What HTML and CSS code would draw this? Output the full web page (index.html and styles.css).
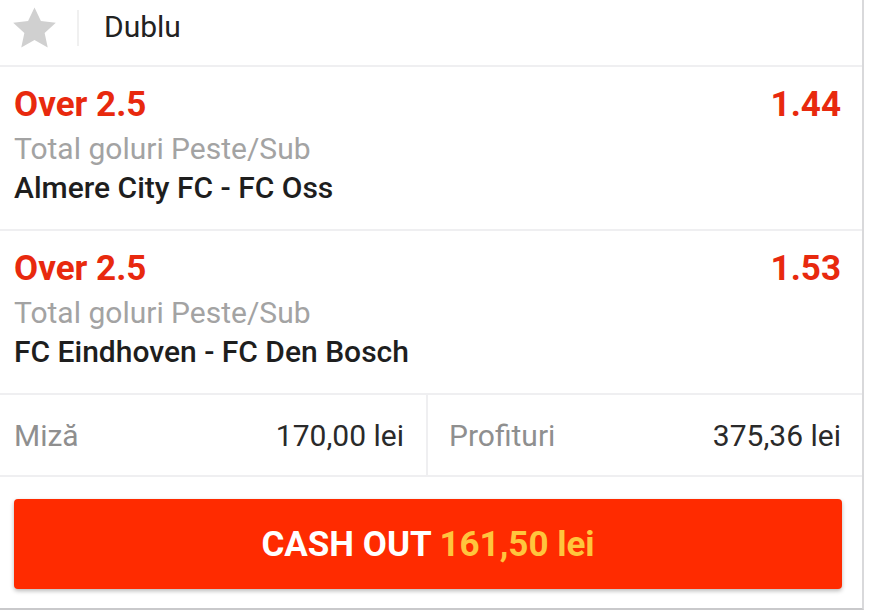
FILE: index.html
```html
<!DOCTYPE html>
<html lang="ro">
<head>
<meta charset="utf-8">
<link rel="stylesheet" href="styles.css">
</head>
<body>
<div class="card">
  <div class="head">
    <svg class="star" viewBox="1.6 1.6 20.8 19.8" width="43" height="41"><path d="M12 1.8l3.1 6.6 7.2.8-5.4 4.9 1.5 7.1L12 17.6l-6.4 3.6 1.5-7.1-5.4-4.9 7.2-.8z" fill="#d0d0d0"/></svg>
    <span class="sep"></span>
    <span class="title">Dublu</span>
  </div>
  <div class="sel">
    <div class="row1"><span class="pick">Over 2.5</span><span class="odd">1.44</span></div>
    <div class="market">Total goluri Peste/Sub</div>
    <div class="match">Almere City FC - FC Oss</div>
  </div>
  <div class="sel">
    <div class="row1"><span class="pick">Over 2.5</span><span class="odd">1.53</span></div>
    <div class="market">Total goluri Peste/Sub</div>
    <div class="match">FC Eindhoven - FC Den Bosch</div>
  </div>
  <div class="stakes">
    <div class="cell"><span class="lbl">Miză</span><span class="val">170,00 lei</span></div>
    <div class="cell right"><span class="lbl">Profituri</span><span class="val">375,36 lei</span></div>
  </div>
  <div class="btnwrap">
    <div class="btn">CASH OUT <span class="amt">161,50 lei</span></div>
  </div>
</div>
</body>
</html>
```

FILE: styles.css
```css
html, body { margin: 0; padding: 0; background: #fff; }
body { font-family: Roboto, "Noto Sans", sans-serif; width: 870px; height: 612px; overflow: hidden; }
.card {
  width: 862px;
  height: 608px;
  border-right: 2px solid #d9d9db;
  border-bottom: 2px solid #c9c9cb;
  background: #fff;
  display: flex;
  flex-direction: column;
}
.head {
  height: 67px;
  flex: none;
  border-bottom: 2px solid #efeff1;
  display: flex;
  align-items: center;
  box-sizing: border-box;
  padding-left: 13px;
  padding-bottom: 12px;
}
.star { display: block; margin-top: 2px; }
.sep { width: 2px; height: 36px; background: #f0f0f0; margin-left: 21px; margin-top: 2px; }
.title { font-size: 30px; color: #222; margin-left: 25px; }
.sel {
  height: 164px;
  flex: none;
  box-sizing: border-box;
  border-bottom: 2px solid #efeff1;
  padding: 17px 21px 0 14px;
  display: flex;
  flex-direction: column;
}
.row1 { display: flex; justify-content: space-between; height: 45px; line-height: 41px; font-size: 35px; font-weight: 700; color: #e8290e; }
.market { font-size: 30px; line-height: 39px; color: #a3a3a3; }
.match { font-size: 30px; line-height: 39px; color: #1e1e1e; font-weight: 500; }
.stakes {
  height: 82px;
  flex: none;
  box-sizing: border-box;
  display: grid;
  grid-template-columns: 426px 1fr;
  column-gap: 2px;
  background: #efeff1;
  border-bottom: 2px solid #efeff1;
}
.cell {
  background: #fff;
  display: flex;
  justify-content: space-between;
  align-items: center;
  padding: 0 22px 0 14px;
  font-size: 30px;
}
.cell.right { padding: 0 21px 0 21px; }
.lbl { color: #8f8f8f; }
.val { color: #2a2a2a; }
.btnwrap { padding: 22px 20px 0 14px; }
.btn {
  height: 90px;
  background: #ff2b00;
  border-radius: 4px;
  box-shadow: 0 2px 4px rgba(0,0,0,0.28);
  color: #fff;
  font-weight: 700;
  font-size: 35px;
  display: flex;
  align-items: center;
  justify-content: center;
  white-space: pre;
}
.amt { color: #ffc53d; }
```
